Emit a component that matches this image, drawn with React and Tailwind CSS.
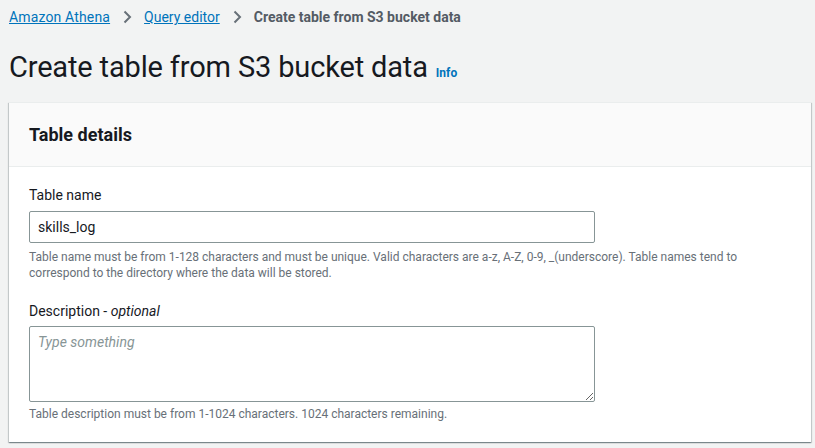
import React from 'react';

const Chevron = () => (
	<svg width="16" height="16" viewBox="0 0 16 16" className="mx-[9px]" fill="none">
		<path d="M5.5 2.5 11 8l-5.5 5.5" stroke="#687078" strokeWidth="2" />
	</svg>
);

export default function App() {
	return (
		<div
			className="min-h-[448px] bg-[#f2f3f3] text-[#16191f]"
			style={{ fontFamily: 'Roboto, "Open Sans", sans-serif' }}
		>
			<div className="px-[9px] pt-[7px]">
				{/* Breadcrumbs */}
				<nav className="flex items-center h-[20px] text-[14px] leading-[20px]">
					<a href="#" className="text-[#0073bb] underline tracking-[0.15px]">Amazon Athena</a>
					<Chevron />
					<a href="#" className="text-[#0073bb] underline">Query editor</a>
					<Chevron />
					<span className="text-[#545b64] font-bold">Create table from S3 bucket data</span>
				</nav>

				{/* Header */}
				<div className="flex items-baseline mt-[20px] h-[40px]">
					<h1 className="text-[29px] leading-[40px] font-normal tracking-[-0.15px]">Create table from S3 bucket data</h1>
					<a href="#" className="ml-[8px] text-[12px] font-bold text-[#0073bb]">Info</a>
				</div>

				{/* Container */}
				<div className="mt-[15px] bg-white border-t border-[#eaeded] shadow-[0_1px_1px_0_rgba(0,28,36,0.3),1px_1px_1px_0_rgba(0,28,36,0.15),-1px_1px_1px_0_rgba(0,28,36,0.15)] mr-[-5px]">
					<div className="bg-[#fafafa] border-b border-[#eaeded] h-[64px] flex items-center px-[20px]">
						<h2 className="text-[18px] font-bold leading-[22px]">Table details</h2>
					</div>
					<div className="px-[20px] pt-[18px] pb-[20px]">
						<label className="block text-[14px] leading-[20px] text-[#16191f]">Table name</label>
						<input
							type="text"
							defaultValue="skills_log"
							className="mt-[6px] block w-[566px] h-[32px] border border-[#879596] rounded-[2px] px-[8px] text-[14px] text-[#16191f] outline-none"
						/>
						<p className="mt-[6px] text-[12px] leading-[16px] text-[#687078] max-w-[740px]">
							Table name must be from 1-128 characters and must be unique. Valid characters are a-z, A-Z, 0-9, _(underscore). Table names tend to correspond to the directory where the data will be stored.
						</p>

						<label className="block mt-[20px] text-[14px] leading-[20px] text-[#16191f]">
							Description - <i>optional</i>
						</label>
						<textarea
							placeholder="Type something"
							className="mt-[5px] block w-[566px] h-[76px] border border-[#879596] rounded-[2px] px-[8px] py-[5px] text-[14px] text-[#16191f] placeholder:text-[#879596] placeholder:italic outline-none"
						/>
						<p className="mt-[4px] text-[12px] leading-[16px] text-[#687078]">
							Table description must be from 1-1024 characters. 1024 characters remaining.
						</p>
					</div>
				</div>
			</div>
		</div>
	);
}
